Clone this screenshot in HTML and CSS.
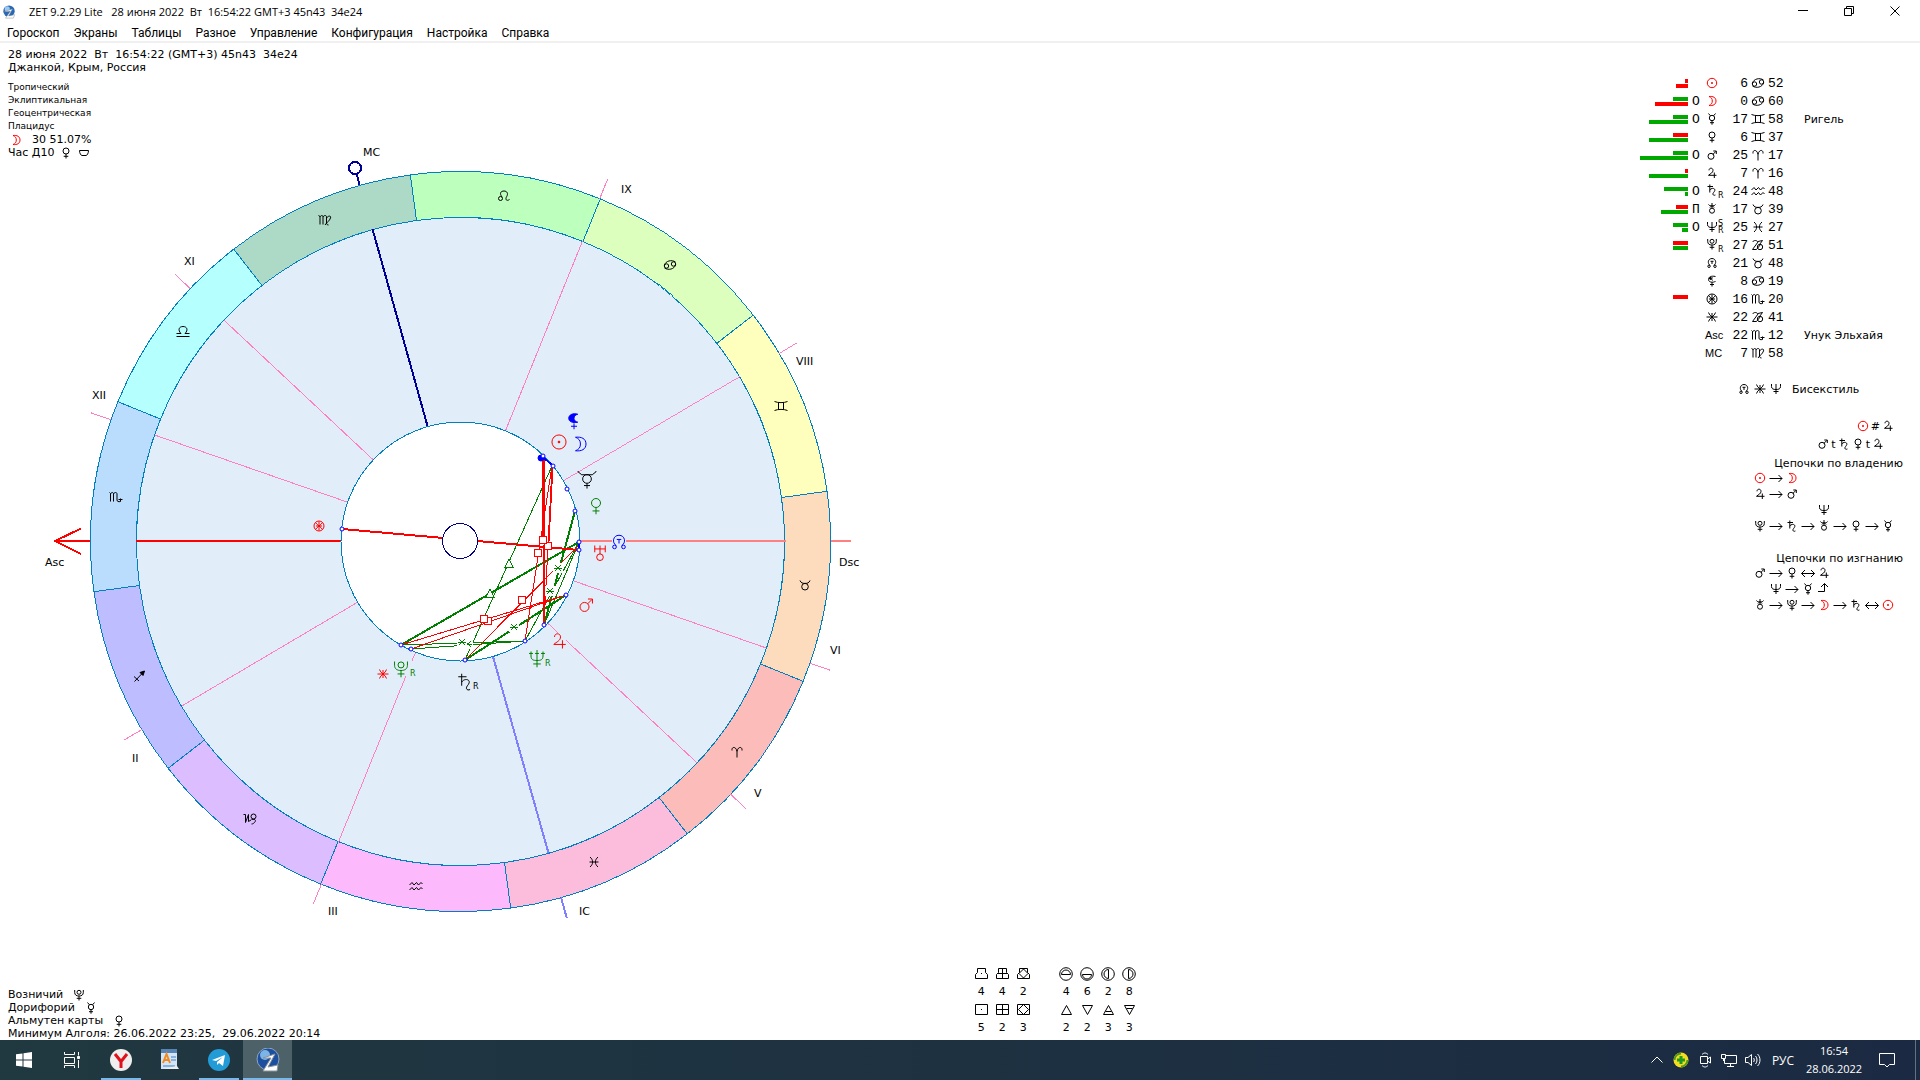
FILE: index.html
```html
<!DOCTYPE html>
<html lang="ru">
<head>
  <meta charset="UTF-8">
  <meta name="viewport" content="width=device-width, initial-scale=1.0">
  <title>ZET 9.2.29 Lite</title>
  <link rel="stylesheet" href="styles.css">
</head>
<body>
  <!-- Glyph library -->
  <svg class="library" aria-hidden="true">
    <!-- Planets and points -->
    <symbol id="sun" viewBox="0 0 12 12"><circle cx="6" cy="6" r="4.7"/><circle class="solid" cx="6" cy="6" r=".6"/></symbol>
    <symbol id="moon" viewBox="0 0 12 12"><path d="M3 1.5c4-.5 7 1 7 4.5S7 11 3 10.5c2.3-.8 3.3-2.3 3.300-4.500S5.300 2.300 3 1.500z"/></symbol>
    <symbol id="mercury" viewBox="0 0 12 12"><circle cx="6" cy="5" r="2.700"/><path d="M2.500.5 4.300 2.700M9.500.5 7.700 2.700M6 7.700v4M4 9.700h4"/></symbol>
    <symbol id="mercury-horned" viewBox="0 0 12 12"><circle cx="6" cy="5.300" r="2.900"/><path d="M0 0V.5L2.500 2.500H9.500L12 .5V0M6 8.300V11.700M4 9.700H8"/></symbol>
    <symbol id="venus" viewBox="0 0 12 12"><circle cx="6" cy="4" r="3"/><path d="M6 7v4.500M3.700 9.300h4.600"/></symbol>
    <symbol id="mars" viewBox="0 0 12 12"><circle cx="5" cy="7.300" r="3"/><path d="M7 5.300 10 2.300M7.300 2H10.300V5"/></symbol>
    <symbol id="jupiter" viewBox="0 0 12 12"><path d="M3 3.300C3 .5 7 .5 7 3.300 7 5.800 4.500 6.500 2.500 8.300H10.500M8.300 5.500V11"/></symbol>
    <symbol id="saturn" viewBox="0 0 12 12"><path d="M1.500 2.500H7M3.800.5V8.500M3.800 6C5.500 3.500 9.300 4 8.800 6.500 8.500 8 6.500 9 7 10.500c.4.900 1.400 1 2.400.5"/></symbol>
    <symbol id="uranus" viewBox="0 0 12 12"><path d="M2.500 1V5.500M9.500 1V5.500M2.500 3.300H9.500M6 1V6.700"/><circle cx="6" cy="8.800" r="2.200"/></symbol>
    <symbol id="uranus-alt" viewBox="0 0 12 12"><path d="M2.500 1.500C3 3.500 9 3.500 9.500 1.500M6 0V5M4 4.500 6 2.500 8 4.500"/><circle cx="6" cy="7.700" r="2.500"/></symbol>
    <symbol id="neptune" viewBox="0 0 12 12"><path d="M1.500 1V3.500C1.500 6 3.500 6.500 6 6.500S10.500 6 10.500 3.500V1M6 1V11M3.500 8.500H8.500"/></symbol>
    <symbol id="neptune-barbed" viewBox="0 0 12 12"><path d="M2 1V4C2 6.500 3.500 7 6 7S10 6.500 10 4V1M6 0V11.500M3.500 9.300H8.500M.7 2.300H3.300M8.700 2.300H11.300M4.700 2.300H7.300"/></symbol>
    <symbol id="pluto" viewBox="0 0 12 12"><circle cx="6" cy="3.300" r="2"/><path d="M1.700 1V3.500C1.700 6 3.500 7 6 7S10.300 6 10.300 3.500V1M6 7V11.500M3.700 9.300H8.300"/></symbol>
    <symbol id="node" viewBox="0 0 12 12"><path d="M4.300 8.500C1 6.500 2 1.500 6 1.500S11 6.500 7.700 8.500M4.500 4.300h3M6 4.300v2.700"/><circle cx="3" cy="9.300" r="1.200"/><circle cx="9" cy="9.300" r="1.200"/></symbol>
    <symbol id="lilith" viewBox="0 0 12 12"><path class="solid" d="M8.500 1.500C5 .5 2.500 2 2.500 4.200S5 7.500 8.500 6.800C7 6.500 6 5.600 6 4.200S7 1.800 8.500 1.500z"/><path d="M6 7.500v4M4 9.500h4"/></symbol>
    <symbol id="lilith-open" viewBox="0 0 12 12"><path d="M9.500 1.500C5 .5 2.500 2 2.500 4.500S5.500 7.500 8.500 7L9.500 6M6.500 2.500 5.500 4 6.500 5.500M6 7V11.500M4 9.500H8"/><path class="solid" d="M3 3.500 5 2 5 4.500z"/></symbol>
    <symbol id="fortune" viewBox="0 0 12 12"><circle cx="6" cy="6" r="5"/><path d="M6 1.500V10.500M2.500 2.500C4 5 8 7 9.500 9.500M9.500 2.500C8 5 4 7 2.500 9.500M3 6H9"/></symbol>
    <symbol id="vertex" viewBox="0 0 12 12"><path d="M.5 6H11.500M6 2V10M2.500 1.500C3 5 9 7 9.500 10.500M9.500 1.500C9 5 3 7 2.500 10.500"/></symbol>

    <!-- Zodiac signs -->
    <symbol id="aries" viewBox="0 0 14 12"><path d="M2 4.500C1.500.5 6 0 7 5.500V11.500M7 5.500C8 0 12.500.5 12 4.500"/></symbol>
    <symbol id="taurus" viewBox="0 0 14 12"><circle cx="7" cy="7.700" r="3.300"/><path d="M2 1.500C3 4 4.500 4.400 7 4.400S11 4 12 1.500"/></symbol>
    <symbol id="gemini" viewBox="0 0 14 12"><path d="M.5 1.500C4 3 10 3 13.500 1.500M.5 10.500C4 9 10 9 13.500 10.500M4.500 2.500V9.500M9.500 2.500V9.500"/></symbol>
    <symbol id="cancer" viewBox="0 0 14 12"><circle cx="3.500" cy="7" r="2.200"/><circle cx="10.500" cy="5" r="2.200"/><path d="M1.300 6.500C2.500 1.500 9 .5 12.500 3M12.700 5.500C11.500 10.500 5 11.500 1.500 9"/></symbol>
    <symbol id="leo" viewBox="0 0 14 12"><circle cx="3.500" cy="8.500" r="2"/><path d="M5 7C2 3 4 1 7 1S11.500 3.500 9.700 6.500 9.500 11.500 12.500 9.500"/></symbol>
    <symbol id="virgo" viewBox="0 0 14 12"><path d="M.5 1.500 2 2.500V10.500M2 3C3 1 5 1 5 3V10.500M5 3C6 1 8.500 1 8.500 3V9C8.500 10.500 9.500 11 10.500 11M8.500 4C10 1.500 13.500 1.500 12.500 4 11.500 7 9 8 7 11"/></symbol>
    <symbol id="libra" viewBox="0 0 14 12"><path d="M.5 11.500H13.500M.5 8.500H5C1.500 5 3 1.500 7 1.500S12.500 5 9 8.500H13.500"/></symbol>
    <symbol id="scorpio" viewBox="0 0 14 12"><path d="M.5 1.500 1.500 2.500V10.500M1.500 3C2.500 1 4.500 1 4.500 3V10.500M4.500 3C5.500 1 8 1 8 3V9C8 10.500 9.500 11 11.500 10.500V7.500M9.500 8.500H13.500"/></symbol>
    <symbol id="sagittarius" viewBox="0 0 14 12"><path d="M2.500 11.500 12 1.500M2 6.500 7 11"/><path class="solid" d="M12.500 1 8 2.500 11 5.500z"/></symbol>
    <symbol id="capricorn" viewBox="0 0 14 12"><path d="M.5 1.500H2.500V9.500L5.500 1.500V8.500L8 7"/><circle cx="10.500" cy="3.500" r="2.500"/><path d="M8.500 6.500C13 5.500 13 8 11.500 9.500S9 11 8.500 11"/></symbol>
    <symbol id="capricorn-alt" viewBox="0 0 14 12"><path d="M1.500 3C3 1 5.500 1 7 3L1.500 10.500H5.500L9.500 5.500M7 2.500 11.500 1.500 8.500 5.500"/><circle cx="9" cy="8" r="2.700"/></symbol>
    <symbol id="aquarius" viewBox="0 0 14 12"><path d="M.5 5 3 2.500 5 5 7.500 2.500 9.500 5 12 2.500 13.500 4M.5 10 3 7.500 5 10 7.500 7.500 9.500 10 12 7.500 13.500 9"/></symbol>
    <symbol id="pisces" viewBox="0 0 14 12"><path d="M3 1C6.500 4 6.500 8 3 11M11 1C7.500 4 7.500 8 11 11M2.500 6H11.500"/></symbol>

    <!-- Arrows between rulers -->
    <symbol id="arrow" viewBox="0 0 14 12"><path d="M.5 6.500H13M9.500 3 13 6.500 9.500 10"/></symbol>
    <symbol id="arrow-both" viewBox="0 0 14 12"><path d="M.5 6.500H13.500M10 3 13.500 6.500 10 10M4 3 .5 6.500 4 10"/></symbol>
    <symbol id="arrow-up" viewBox="0 0 14 12"><path d="M1 8.500H7.500V.5M4 4 7.500.5 11 4"/></symbol>

    <!-- Wheel parts -->
    <path id="sector" d="M324 0H370A370 370 0 0 0 320.430-185L280.590-162A324 324 0 0 1 324 0Z"/>
    <path id="cusp" d="M120 0H324M370 0H391"/>
    <g id="square"><rect class="marker" x="-3.500" y="-3.500" width="7" height="7"/></g>
    <g id="trine"><path class="marker" d="M0-4 4 4H-4z"/></g>
    <g id="sextile"><rect class="blank" x="-5" y="-5" width="10" height="10"/><path d="M-4 0H4M-3-3 3 3M3-3-3 3"/></g>
  </svg>

  <header class="titlebar">
    <svg class="app-icon" viewBox="0 0 32 32"><circle cx="16" cy="14" r="13" fill="#2868b4"/><circle cx="12" cy="9" r="6" fill="#9cc7ee"/><path d="M5 15 24 9 15 25 29 22 26 30H8L19 14z" fill="#fff" stroke="#77828e"/></svg>
    <h1>ZET 9.2.29 Lite &nbsp; 28 июня 2022 &nbsp;Вт &nbsp;16:54:22 GMT+3 45n43 &nbsp;34e24</h1>
    <div class="window-buttons">
      <button aria-label="Свернуть"><svg viewBox="0 0 10 10"><path d="M0 4.500H10"/></svg></button>
      <button aria-label="Восстановить"><svg viewBox="0 0 10 10"><path d="M.5 2.500H7.500V9.500H.5zM2.500 2V.5H9.500V7.500H8"/></svg></button>
      <button aria-label="Закрыть"><svg viewBox="0 0 10 10"><path d="M.5.5 9.500 9.500M9.500.5.5 9.500"/></svg></button>
    </div>
  </header>

  <nav class="menu">
    <button>Гороскоп</button>
    <button>Экраны</button>
    <button>Таблицы</button>
    <button>Разное</button>
    <button>Управление</button>
    <button>Конфигурация</button>
    <button>Настройка</button>
    <button>Справка</button>
  </nav>

  <main class="workspace">
    <section class="chart-area">
      <div class="info">
        <p>28 июня 2022 &nbsp;Вт &nbsp;16:54:22 (GMT+3) 45n43 &nbsp;34e24</p>
        <p>Джанкой, Крым, Россия</p>
        <ul class="settings">
          <li>Тропический</li>
          <li>Эклиптикальная</li>
          <li>Геоцентрическая</li>
          <li>Плацидус</li>
        </ul>
        <p class="moon-phase"><svg class="glyph red"><use href="#moon"/></svg>30 51.07%</p>
        <p class="hour">Час Д10 <svg class="glyph"><use href="#venus"/></svg><svg class="glyph" viewBox="0 0 12 12"><path d="M1.500 3.500H10.500C10.500 6.500 9 8.500 8 8.500H4C3 8.500 1.500 6.500 1.500 3.500z"/></svg></p>
      </div>

      <svg class="wheel" viewBox="0 43 940 997" preserveAspectRatio="xMinYMin meet" role="img" aria-label="Натальная карта">
        <g class="rings" transform="translate(460.5 541.5)">
          <circle class="field" r="324"/>
          <use class="gemini" href="#sector" transform="rotate(-7.800)"/>
          <use class="cancer" href="#sector" transform="rotate(-37.800)"/>
          <use class="leo" href="#sector" transform="rotate(-67.800)"/>
          <use class="virgo" href="#sector" transform="rotate(-97.800)"/>
          <use class="libra" href="#sector" transform="rotate(-127.800)"/>
          <use class="scorpio" href="#sector" transform="rotate(-157.800)"/>
          <use class="sagittarius" href="#sector" transform="rotate(-187.800)"/>
          <use class="capricorn" href="#sector" transform="rotate(-217.800)"/>
          <use class="aquarius" href="#sector" transform="rotate(-247.800)"/>
          <use class="pisces" href="#sector" transform="rotate(-277.800)"/>
          <use class="aries" href="#sector" transform="rotate(-307.800)"/>
          <use class="taurus" href="#sector" transform="rotate(-337.800)"/>
        </g>

        <!-- House cusps -->
        <g class="cusps" transform="translate(460.5 541.5)">
          <use href="#cusp" transform="rotate(-30.550)"/>
          <use href="#cusp" transform="rotate(-67.900)"/>
          <use href="#cusp" transform="rotate(-136.900)"/>
          <use href="#cusp" transform="rotate(-160.800)"/>
          <use href="#cusp" transform="rotate(-210.550)"/>
          <use href="#cusp" transform="rotate(-247.900)"/>
          <use href="#cusp" transform="rotate(-316.900)"/>
          <use href="#cusp" transform="rotate(-340.800)"/>
          <use class="ic" href="#cusp" transform="rotate(-285.770)"/>
        </g>
        <g class="mc">
          <path d="M427.500 426 372.500 229M359.500 185 357 175"/>
          <circle cx="355" cy="168" r="6"/>
        </g>
        <path class="asc" d="M341 541H136M90 541H55M81 528.500 55 541 81 554"/>
        <path class="dsc" d="M580 541H786M831 541H851"/>
        <circle class="core" cx="460.500" cy="541.500" r="119.500"/>

        <!-- Aspect lines -->
        <g class="aspects">
          <g class="green">
            <path d="M552 466 465 660M579 542 525 641M579 542 544 625M525 641 401 645M525 641 411 649"/>
            <path class="strong" d="M579 542 401 645M566 595 465 660M575 511 544 625"/>
          </g>
          <g class="red">
            <path d="M552 466 525 641M552 466 544 625M579 545 465 660M566 595 401 645M566 595 411 649M553 466 549 541"/>
            <path class="strong" d="M342 529 579 550M544 545V625"/>
            <path class="strongest" d="M543 457V538"/>
          </g>
          <path class="strong blue" d="M543 457 553 466M579 542V550"/>
          <g class="red">
            <use href="#square" x="548" y="546"/>
            <use href="#square" x="488" y="621"/>
            <use href="#square" x="543" y="540"/>
            <use href="#square" x="538" y="553"/>
            <use href="#square" x="522" y="600"/>
            <use href="#square" x="484" y="619"/>
          </g>
          <g class="green">
            <use href="#trine" x="509" y="563"/>
            <use href="#trine" x="490" y="593"/>
            <use href="#sextile" x="558" y="568"/>
            <use href="#sextile" x="550" y="591"/>
            <use href="#sextile" x="514" y="627"/>
            <use href="#sextile" x="468" y="644"/>
            <use href="#sextile" x="462" y="642"/>
          </g>
        </g>
        <circle class="center" cx="460" cy="541" r="17.500"/>
        <g class="points">
          <circle class="dot" cx="541" cy="458" r="3"/>
          <circle cx="543" cy="456" r="2"/>
          <circle cx="553" cy="466" r="2"/>
          <circle cx="567" cy="489" r="2"/>
          <circle cx="575" cy="511" r="2"/>
          <circle cx="579" cy="542" r="2"/>
          <circle cx="579" cy="550" r="2"/>
          <circle cx="566" cy="595" r="2"/>
          <circle cx="544" cy="625" r="2"/>
          <circle cx="525" cy="641" r="2"/>
          <circle cx="465" cy="660" r="2"/>
          <circle cx="411" cy="649" r="2"/>
          <circle cx="401" cy="645" r="2"/>
          <circle cx="342" cy="529" r="2"/>
        </g>

        <!-- Signs on the ring -->
        <g class="signs">
          <use href="#virgo" x="318" y="214" width="14" height="12"/>
          <use href="#libra" x="176" y="325" width="14" height="12"/>
          <use href="#scorpio" x="109" y="491" width="14" height="12"/>
          <use href="#leo" x="497" y="190" width="14" height="12"/>
          <use href="#cancer" x="663" y="259" width="14" height="12"/>
          <use href="#gemini" x="774" y="400" width="14" height="12"/>
          <use href="#taurus" x="798" y="579" width="14" height="12"/>
          <use href="#aries" x="730" y="746" width="14" height="12"/>
          <use href="#pisces" x="587" y="856" width="14" height="12"/>
          <use href="#sagittarius" x="132" y="670" width="14" height="12"/>
          <use href="#capricorn" x="243" y="813" width="14" height="12"/>
          <use href="#aquarius" x="409" y="880" width="14" height="12"/>
        </g>

        <!-- Planets -->
        <g class="planets">
          <rect class="gap" x="612" y="535" width="14" height="12"/>
          <rect class="gap" x="552" y="633" width="14" height="14"/>
          <rect class="gap" x="393" y="661" width="24" height="15"/>
          <use class="blue" href="#lilith" x="565" y="412" width="18" height="18"/>
          <use class="red" href="#sun" x="550" y="433" width="18" height="18"/>
          <use class="blue" href="#moon" x="571" y="435" width="18" height="18"/>
          <use href="#mercury-horned" x="578" y="471" width="18" height="18"/>
          <use class="green" href="#venus" x="587" y="497" width="18" height="18"/>
          <use class="red" href="#uranus" x="591" y="544" width="18" height="18"/>
          <use class="blue" href="#node" x="610" y="533" width="18" height="18"/>
          <use class="red" href="#mars" x="577" y="596" width="18" height="18"/>
          <use class="red" href="#jupiter" x="550" y="632" width="18" height="18"/>
          <use class="green" href="#neptune-barbed" x="528" y="650" width="18" height="18"/>
          <use href="#saturn" x="456" y="673" width="18" height="18"/>
          <use class="green" href="#pluto" x="392" y="660" width="18" height="18"/>
          <use class="red" href="#vertex" x="377" y="668" width="12" height="12"/>
          <use class="red" href="#fortune" x="313" y="520" width="12" height="12"/>
        </g>
        <g class="retro">
          <text class="green" x="545" y="666">R</text>
          <text x="473" y="689">R</text>
          <text class="green" x="410" y="676">R</text>
        </g>

        <g class="houses">
          <text x="363" y="156">MC</text>
          <text x="184" y="265">XI</text>
          <text x="92" y="399">XII</text>
          <text x="45" y="566">Asc</text>
          <text x="132" y="762">II</text>
          <text x="328" y="915">III</text>
          <text x="579" y="915">IC</text>
          <text x="754" y="797">V</text>
          <text x="830" y="654">VI</text>
          <text x="839" y="566">Dsc</text>
          <text x="796" y="365">VIII</text>
          <text x="621" y="193">IX</text>
        </g>
      </svg>

      <div class="notes">
        <p>Возничий <svg class="glyph"><use href="#pluto"/></svg></p>
        <p>Дорифорий <svg class="glyph"><use href="#mercury"/></svg></p>
        <p>Альмутен карты <svg class="glyph"><use href="#venus"/></svg></p>
        <p>Минимум Алголя: 26.06.2022 23:25, &nbsp;29.06.2022 20:14</p>
      </div>
    </section>

    <!-- Crosses, elements and hemispheres -->
    <section class="counts">
      <div class="count-group">
        <div class="count"><svg viewBox="0 0 13 12"><path d="M2.500.5H10.500V4.500L12.500 6.500V10.500H.5V6.500L2.500 4.500zM6 5.500h1"/></svg>4</div>
        <div class="count"><svg viewBox="0 0 13 12"><path d="M2.500.5H10.500V4.500L12.500 6.500V10.500H.5V6.500L2.500 4.500zM6.500.5V10.500M1 5.500H12"/></svg>4</div>
        <div class="count"><svg viewBox="0 0 13 12"><path d="M2.500.5H10.500V4.500L12.500 6.500V10.500H.5V6.500L2.500 4.500zM6.500 1 11 5.500 6.500 10 2 5.500z"/></svg>2</div>
        <div class="count"><svg viewBox="0 0 13 12"><path d="M.5.5H12.500V10.500H.5zM6 5.500h1"/></svg>5</div>
        <div class="count"><svg viewBox="0 0 13 12"><path d="M.5.5H12.500V10.500H.5zM6.500.5V10.500M.5 5.500H12.500"/></svg>2</div>
        <div class="count"><svg viewBox="0 0 13 12"><path d="M.5.5H12.500V10.500H.5zM6.500.5 11.500 5.500 6.500 10.500 1.500 5.500z"/></svg>3</div>
      </div>
      <div class="count-group wide">
        <div class="count"><svg viewBox="0 0 14 14"><circle cx="7" cy="7" r="6.300"/><path d="M2.500 7.500A4.500 4.500 0 0 1 11.500 7.500z"/></svg>4</div>
        <div class="count"><svg viewBox="0 0 14 14"><circle cx="7" cy="7" r="6.300"/><path d="M2.500 7.500A4.500 4.500 0 0 0 11.500 7.500z"/></svg>6</div>
        <div class="count"><svg viewBox="0 0 14 14"><circle cx="7" cy="7" r="6.300"/><path d="M7.500 2.500A4.500 4.500 0 0 0 7.500 11.500z"/></svg>2</div>
        <div class="count"><svg viewBox="0 0 14 14"><circle cx="7" cy="7" r="6.300"/><path d="M6.500 2.500A4.500 4.500 0 0 1 6.500 11.500z"/></svg>8</div>
        <div class="count"><svg viewBox="0 0 11 10"><path d="M5.500.5 10.500 9.500H.5z"/></svg>2</div>
        <div class="count"><svg viewBox="0 0 11 10"><path d="M5.500 9.500 10.500.5H.5z"/></svg>2</div>
        <div class="count"><svg viewBox="0 0 11 10"><path d="M5.500.5 10.500 9.500H.5zM2.500 6.500H8.500"/></svg>3</div>
        <div class="count"><svg viewBox="0 0 11 10"><path d="M5.500 9.500 10.500.5H.5zM2.500 3.500H8.500"/></svg>3</div>
      </div>
    </section>

    <aside class="positions">
      <table>
        <colgroup>
          <col class="col-bars"><col class="col-mark"><col class="col-planet"><col class="col-degree"><col class="col-sign"><col class="col-minute"><col>
        </colgroup>
        <tr><td class="bars"><i class="bad" style="width:3px"></i><i class="bad" style="width:12px"></i></td><td></td><td><svg class="glyph red"><use href="#sun"/></svg></td><td>6</td><td><svg class="sign"><use href="#cancer"/></svg></td><td>52</td><td></td></tr>
        <tr><td class="bars"><i class="good" style="width:15px"></i><i class="bad" style="width:33px"></i></td><td>О</td><td><svg class="glyph red"><use href="#moon"/></svg></td><td>0</td><td><svg class="sign"><use href="#cancer"/></svg></td><td>60</td><td></td></tr>
        <tr><td class="bars"><i class="good" style="width:15px"></i><i class="good" style="width:39px"></i></td><td>О</td><td><svg class="glyph"><use href="#mercury"/></svg></td><td>17</td><td><svg class="sign"><use href="#gemini"/></svg></td><td>58</td><td>Ригель</td></tr>
        <tr><td class="bars"><i class="bad" style="width:15px"></i><i class="good" style="width:39px"></i></td><td></td><td><svg class="glyph"><use href="#venus"/></svg></td><td>6</td><td><svg class="sign"><use href="#gemini"/></svg></td><td>37</td><td></td></tr>
        <tr><td class="bars"><i class="good" style="width:15px"></i><i class="good" style="width:48px"></i></td><td>О</td><td><svg class="glyph"><use href="#mars"/></svg></td><td>25</td><td><svg class="sign"><use href="#aries"/></svg></td><td>17</td><td></td></tr>
        <tr><td class="bars"><i class="bad" style="width:3px"></i><i class="good" style="width:39px"></i></td><td></td><td><svg class="glyph"><use href="#jupiter"/></svg></td><td>7</td><td><svg class="sign"><use href="#aries"/></svg></td><td>16</td><td></td></tr>
        <tr><td class="bars"><i class="good" style="width:24px"></i><i class="good" style="width:3px"></i></td><td>О</td><td><svg class="glyph"><use href="#saturn"/></svg><sub>R</sub></td><td>24</td><td><svg class="sign"><use href="#aquarius"/></svg></td><td>48</td><td></td></tr>
        <tr><td class="bars"><i class="bad" style="width:12px"></i><i class="good" style="width:27px"></i></td><td>П</td><td><svg class="glyph"><use href="#uranus-alt"/></svg></td><td>17</td><td><svg class="sign"><use href="#taurus"/></svg></td><td>39</td><td></td></tr>
        <tr><td class="bars"><i class="good" style="width:15px"></i><i class="good" style="width:6px"></i></td><td>О</td><td><svg class="glyph"><use href="#neptune"/></svg><sub class="stack">S<br>R</sub></td><td>25</td><td><svg class="sign"><use href="#pisces"/></svg></td><td>27</td><td></td></tr>
        <tr><td class="bars"><i class="bad" style="width:15px"></i><i class="good" style="width:15px"></i></td><td></td><td><svg class="glyph"><use href="#pluto"/></svg><sub>R</sub></td><td>27</td><td><svg class="sign"><use href="#capricorn-alt"/></svg></td><td>51</td><td></td></tr>
        <tr><td></td><td></td><td><svg class="glyph"><use href="#node"/></svg></td><td>21</td><td><svg class="sign"><use href="#taurus"/></svg></td><td>48</td><td></td></tr>
        <tr><td></td><td></td><td><svg class="glyph"><use href="#lilith-open"/></svg></td><td>8</td><td><svg class="sign"><use href="#cancer"/></svg></td><td>19</td><td></td></tr>
        <tr><td class="bars"><i class="bad" style="width:15px"></i><i style="width:0"></i></td><td></td><td><svg class="glyph"><use href="#fortune"/></svg></td><td>16</td><td><svg class="sign"><use href="#scorpio"/></svg></td><td>20</td><td></td></tr>
        <tr><td></td><td></td><td><svg class="glyph"><use href="#vertex"/></svg></td><td>22</td><td><svg class="sign"><use href="#capricorn-alt"/></svg></td><td>41</td><td></td></tr>
        <tr><td></td><td></td><td class="angle">Asc</td><td>22</td><td><svg class="sign"><use href="#scorpio"/></svg></td><td>12</td><td>Унук Эльхайя</td></tr>
        <tr><td></td><td></td><td class="angle">MC</td><td>7</td><td><svg class="sign"><use href="#virgo"/></svg></td><td>58</td><td></td></tr>
      </table>

      <p class="figure"><svg class="glyph"><use href="#node"/></svg><svg class="glyph"><use href="#vertex"/></svg><svg class="glyph"><use href="#neptune"/></svg><span>Бисекстиль</span></p>

      <p class="pairs"><svg class="glyph red"><use href="#sun"/></svg>#<svg class="glyph"><use href="#jupiter"/></svg></p>
      <p class="pairs shifted"><svg class="glyph"><use href="#mars"/></svg>t<svg class="glyph"><use href="#saturn"/></svg><svg class="glyph second"><use href="#venus"/></svg>t<svg class="glyph"><use href="#jupiter"/></svg></p>

      <div class="chains">
        <h2>Цепочки по владению</h2>
        <div class="chain"><svg class="glyph red"><use href="#sun"/></svg><svg class="sign"><use href="#arrow"/></svg><svg class="glyph red"><use href="#moon"/></svg></div>
        <div class="chain"><svg class="glyph"><use href="#jupiter"/></svg><svg class="sign"><use href="#arrow"/></svg><svg class="glyph"><use href="#mars"/></svg></div>
        <div class="chain indent-four"><svg class="glyph"><use href="#neptune"/></svg></div>
        <div class="chain"><svg class="glyph"><use href="#pluto"/></svg><svg class="sign"><use href="#arrow"/></svg><svg class="glyph"><use href="#saturn"/></svg><svg class="sign"><use href="#arrow"/></svg><svg class="glyph"><use href="#uranus-alt"/></svg><svg class="sign"><use href="#arrow"/></svg><svg class="glyph"><use href="#venus"/></svg><svg class="sign"><use href="#arrow"/></svg><svg class="glyph"><use href="#mercury"/></svg></div>
      </div>
      <div class="chains">
        <h2>Цепочки по изгнанию</h2>
        <div class="chain"><svg class="glyph"><use href="#mars"/></svg><svg class="sign"><use href="#arrow"/></svg><svg class="glyph"><use href="#venus"/></svg><svg class="sign"><use href="#arrow-both"/></svg><svg class="glyph"><use href="#jupiter"/></svg></div>
        <div class="chain indent-one"><svg class="glyph"><use href="#neptune"/></svg><svg class="sign"><use href="#arrow"/></svg><svg class="glyph"><use href="#mercury"/></svg><svg class="sign"><use href="#arrow-up"/></svg></div>
        <div class="chain"><svg class="glyph"><use href="#uranus-alt"/></svg><svg class="sign"><use href="#arrow"/></svg><svg class="glyph"><use href="#pluto"/></svg><svg class="sign"><use href="#arrow"/></svg><svg class="glyph red"><use href="#moon"/></svg><svg class="sign"><use href="#arrow"/></svg><svg class="glyph"><use href="#saturn"/></svg><svg class="sign"><use href="#arrow-both"/></svg><svg class="glyph red"><use href="#sun"/></svg></div>
      </div>
    </aside>
  </main>

  <footer class="taskbar">
    <div class="apps">
      <button class="system" aria-label="Пуск"><svg class="i16" viewBox="0 0 16 16" fill="#fff"><path d="M0 2.300 6.500 1.400V7.500H0zM7.500 1.200 16 0V7.500H7.500zM0 8.500H6.500V14.600L0 13.700zM7.500 8.500H16V16L7.500 14.800z"/></svg></button>
      <button class="system" aria-label="Представление задач"><svg class="i16" viewBox="0 0 16 16" fill="none" stroke="#fff"><path d="M.5 0V2.500H10.500V0M.5 5.500H10.500V11.500H.5zM.5 16V13.500H10.500V16M14.500 0V3.500M14.500 8V16"/><path fill="#fff" d="M13.500 4.500h2v2h-2z"/></svg></button>
      <button class="open" aria-label="Яндекс Браузер"><svg class="i24" viewBox="0 0 24 24"><circle cx="12" cy="12" r="11" fill="#eee"/><path d="M6 6 12 13.500 18 6M12 13V20" fill="none" stroke="#e0101c" stroke-width="3"/></svg></button>
      <button aria-label="WordPad"><svg class="i24" viewBox="0 0 24 24"><path d="M3 1H19V21H3z" fill="#d3e5f5"/><path d="M3 1H19V5H3z" fill="#5684b4"/><path d="M5 15 8.500 6 12 15M6 12H11" fill="none" stroke="#f08a20" stroke-width="2"/><path d="M13 9H18M13 12H18M5 18H17" stroke="#3f7fc1"/><path d="M5 21H21L19 18z" fill="#eee"/></svg></button>
      <button class="open" aria-label="Telegram"><svg class="i24" viewBox="0 0 24 24"><circle cx="12" cy="12" r="11" fill="#229bd6"/><path d="M5 12 18 7 16 18 12 15 10 17V14L16 9 9 13z" fill="#fff"/></svg></button>
      <button class="open active" aria-label="ZET"><svg class="i24" viewBox="0 0 24 24"><circle cx="12" cy="11" r="11" fill="#1d4f9f" stroke="#8fa4bd"/><circle cx="9" cy="7" r="5" fill="#7db4e6"/><path d="M7 10 19 6 12 19 22 17 21 23H7L15 10z" fill="#fff" stroke="#8b949c"/></svg></button>
    </div>
    <div class="tray">
      <button aria-label="Скрытые значки"><svg class="i16" viewBox="0 0 16 16"><path d="M2.500 10.500 8 5 13.500 10.500"/></svg></button>
      <button aria-label="Антивирус"><svg class="i16" viewBox="0 0 16 16"><circle cx="8" cy="8" r="7.500" fill="#f4dc20" stroke="none"/><path d="M1.500 8A6.500 6.500 0 0 1 8 1.500M14.500 8A6.500 6.500 0 0 1 8 14.500" stroke="#4f9a20" stroke-width="2"/><path d="M8 4V12M4 8H12" stroke="#219a21" stroke-width="3"/></svg></button>
      <button aria-label="Камера"><svg class="i16" viewBox="0 0 16 16"><path d="M3.500 4.500H10.500V11.500H3.500zM10.500 7 13.500 5V11L10.500 9M5 2.500C7 .5 9 .5 11 2.500M5 13.500C7 15.500 9 15.500 11 13.500"/></svg></button>
      <button aria-label="Сеть"><svg class="i16" viewBox="0 0 16 16"><path d="M5 3.500H15.500V11.500H3.500V7M9.500 11.500V14.500M6 14.500H13M.5 2.500H4.500V6.500H.5zM2.500 6.500V9"/></svg></button>
      <button aria-label="Громкость"><svg class="i16" viewBox="0 0 16 16"><path d="M.5 5.500H3L6.500 2.500V13.500L3 10.500H.5zM8.500 6C9.500 7 9.500 9 8.500 10M10.500 4C12.500 6 12.500 10 10.500 12M12.500 2C15.800 5 15.800 11 12.500 14"/></svg></button>
      <button class="language">РУС</button>
      <button class="clock"><time>16:54</time><time>28.06.2022</time></button>
      <button class="notify" aria-label="Уведомления"><svg class="i16" viewBox="0 0 16 16"><path d="M.5 1.500H15.500V12.500H10.500L8 15 5.500 12.500H.5z"/></svg></button>
      <button class="desktop" aria-label="Показать рабочий стол"></button>
    </div>
  </footer>
</body>
</html>
```
FILE: styles.css
```css
* {
  margin: 0;
  padding: 0;
  box-sizing: border-box;
}

body {
  display: flex;
  flex-direction: column;
  height: 100vh;
  background: #fff;
  color: #000;
  font-family: "DejaVu Sans", Verdana, sans-serif;
  font-size: 11px;
  line-height: 13px;
  overflow: hidden;
}

button {
  border: none;
  background: none;
  color: inherit;
  font: inherit;
}

svg {
  display: block;
  flex: none;
}

ul {
  list-style: none;
}

/* Glyphs */
.library {
  position: absolute;
  width: 0;
  height: 0;
}

symbol {
  overflow: visible;
}

symbol * {
  vector-effect: non-scaling-stroke;
}

.glyph,
.sign {
  width: 12px;
  height: 12px;
  overflow: visible;
  fill: none;
  stroke: currentColor;
}

.sign {
  width: 14px;
}

.solid {
  fill: currentColor;
}

.red {
  color: #f00;
}

.green {
  color: #008000;
}

.blue {
  color: #00f;
}

/* Window header */
.titlebar,
.menu,
.window-buttons {
  display: flex;
  align-items: center;
}

.titlebar,
.taskbar {
  font-family: "Open Sans", "Segoe UI", sans-serif;
}

.titlebar {
  height: 23px;
  padding: 0 2px;
}

.titlebar h1 {
  margin-left: 13px;
  font-size: 11px;
  font-weight: normal;
}

.app-icon {
  width: 14px;
  height: 16px;
}

.window-buttons {
  margin-left: auto;
}

.window-buttons button {
  display: flex;
  justify-content: center;
  width: 46px;
  padding: 4px 0 6px;
}

.window-buttons svg {
  width: 10px;
  height: 10px;
  fill: none;
  stroke: #000;
}

.menu {
  gap: 14px;
  height: 20px;
  padding: 2px 7px 0;
  border-bottom: 2px solid #f0f0f0;
  font-family: Roboto, "Segoe UI", sans-serif;
  font-size: 12px;
}

/* Workspace */
.workspace {
  display: grid;
  grid-template-columns: 49% 1fr 300px;
  flex: 1;
  min-height: 0;
}

.chart-area {
  display: grid;
  grid-template-rows: minmax(0, 1fr);
  min-height: 0;
}

.chart-area > * {
  grid-area: 1 / 1;
}

.info {
  padding: 5px 8px;
}

.settings {
  margin-top: 7px;
  font-size: 9px;
}

.info .moon-phase,
.hour,
.notes p {
  display: flex;
  align-items: center;
}

.moon-phase {
  gap: 10px;
  padding-left: 2px;
}

.hour {
  gap: 6px;
}

.notes {
  align-self: end;
  padding-left: 8px;
}

.notes p {
  gap: 10px;
}

/* Wheel */
.wheel {
  width: 100%;
  height: 100%;
  fill: none;
  stroke: currentColor;
  shape-rendering: crispEdges;
}

.rings,
.core {
  stroke: #0080c0;
}

.field {
  fill: #e1edf9;
}

.gemini { fill: #ffffbd; }
.cancer { fill: #dcffbd; }
.leo { fill: #bdffbd; }
.virgo { fill: #addac6; }
.libra { fill: #b6ffff; }
.scorpio { fill: #bbddfd; }
.sagittarius { fill: #bdbdff; }
.capricorn { fill: #dcbdff; }
.aquarius { fill: #fcbafc; }
.pisces { fill: #fcbddd; }
.aries { fill: #fcbdba; }
.taurus { fill: #fcdcbd; }

.cusps {
  stroke: #ff80c0;
}

.ic {
  stroke: #8080ff;
  stroke-width: 2;
}

.mc {
  stroke: #000096;
  stroke-width: 2;
}

.asc {
  stroke: #f00;
  stroke-width: 2;
}

.dsc {
  stroke: #ff8080;
  stroke-width: 2;
}

.core,
.center,
.marker {
  fill: #fff;
}

.center {
  stroke: #000080;
}

.blank {
  fill: #fff;
  stroke: none;
}

.gap {
  fill: #e1edf9;
  stroke: none;
}

.strong {
  stroke-width: 2;
}

.strongest {
  stroke-width: 3;
}

.points {
  fill: #fff;
  stroke: #00f;
}

.points .dot {
  fill: #00f;
}

.signs,
.planets,
.points {
  shape-rendering: geometricPrecision;
}

.houses,
.retro {
  fill: currentColor;
  stroke: none;
}

.retro {
  font-size: 8px;
}

.retro .green {
  fill: #008000;
}

/* Element counts */
.counts {
  display: flex;
  align-items: flex-end;
  gap: 22px;
  padding: 0 30px 3px;
}

.count-group {
  display: grid;
  grid-template-columns: repeat(3, 21px);
}

.count-group.wide {
  grid-template-columns: repeat(4, 21px);
}

.count {
  display: grid;
  grid-template-rows: 18px 16px;
  row-gap: 0;
  padding-bottom: 2px;
  place-items: center;
}

.count svg {
  width: 14px;
  height: 14px;
  fill: none;
  stroke: #000;
}

.count svg[viewBox="0 0 13 12"] {
  width: 13px;
  height: 12px;
}

.count svg[viewBox="0 0 11 10"] {
  width: 11px;
  height: 10px;
}

/* Positions */
.positions {
  padding: 31px 0 0 16px;
}

table {
  width: 100%;
  table-layout: fixed;
  border-collapse: collapse;
}

.col-bars { width: 52px; }
.col-mark { width: 14px; }
.col-planet { width: 25px; }
.col-degree { width: 21px; }
.col-sign { width: 20px; }
.col-minute { width: 36px; }

tr {
  height: 18px;
}

td {
  height: 18px;
  vertical-align: middle;
  white-space: nowrap;
  font-family: "Liberation Mono", "Courier New", monospace;
  font-size: 13px;
}

td:nth-child(2),
td:nth-child(3) {
  padding-left: 4px;
}

td:nth-child(4) {
  text-align: right;
}

td:nth-child(5) {
  padding-left: 3px;
}

td:nth-child(7) {
  font-family: "DejaVu Sans", Verdana, sans-serif;
  font-size: 11px;
}

td .glyph,
td .sign {
  display: inline-block;
  vertical-align: middle;
}

td sub {
  font-family: "DejaVu Sans", sans-serif;
  font-size: 8px;
  line-height: 7px;
}

.stack {
  display: inline-block;
  vertical-align: middle;
}

td.angle {
  padding-left: 3px;
  font-family: "Liberation Sans", Arial, sans-serif;
  font-size: 11px;
}

.bars i {
  display: block;
  height: 4px;
  margin-left: auto;
}

.bars i + i {
  margin-top: 1px;
}

.good {
  background: #00a800;
}

.bad {
  background: #f00;
}

.figure,
.pairs,
.chain {
  display: flex;
  align-items: center;
}

.figure {
  gap: 4px;
  height: 18px;
  margin: 18px 0 19px;
  padding-left: 102px;
}

.figure span {
  margin-left: 6px;
}

.pairs {
  justify-content: flex-end;
  gap: 2px;
  height: 18px;
  padding-right: 26px;
}

.pairs.shifted {
  padding-right: 36px;
}

.chains {
  padding: 4px 17px 0 116px;
}

.chains + .chains {
  padding-top: 18px;
}

.chains h2 {
  display: flex;
  justify-content: flex-end;
  font-size: 11px;
  font-weight: normal;
  white-space: nowrap;
}

.chain {
  height: 16px;
}

.chain .glyph {
  margin: 0 2px;
}

.chain .sign {
  margin: 0 1px;
}

.indent-one {
  padding-left: 16px;
}

.indent-four {
  padding-left: 64px;
}

/* Taskbar */
.taskbar {
  display: flex;
  justify-content: space-between;
  height: 40px;
  background: linear-gradient(90deg, #203840, #1b2a42);
  color: #fff;
  font-size: 12px;
}

.apps,
.tray {
  display: flex;
}

.apps button,
.tray button {
  display: flex;
  align-items: center;
  justify-content: center;
  width: 49px;
}

.apps .system {
  width: 48px;
}

.apps .open {
  background: linear-gradient(#76b9ed, #76b9ed) center bottom / 40px 2px no-repeat;
}

.apps .active {
  background-color: #4d6168;
  background-size: 100% 2px;
}

.i16 {
  width: 16px;
  height: 16px;
}

.i24 {
  width: 24px;
  height: 24px;
}

.tray svg {
  fill: none;
  stroke: #fff;
}

.tray button {
  width: 24px;
}

.tray .language {
  width: 36px;
}

.tray .clock {
  flex-direction: column;
  width: 66px;
  font-size: 11px;
  line-height: 18px;
}

.tray .notify {
  width: 40px;
}

.tray .desktop {
  width: 5px;
  margin-left: 8px;
  border-left: 1px solid #66717f;
}
```
